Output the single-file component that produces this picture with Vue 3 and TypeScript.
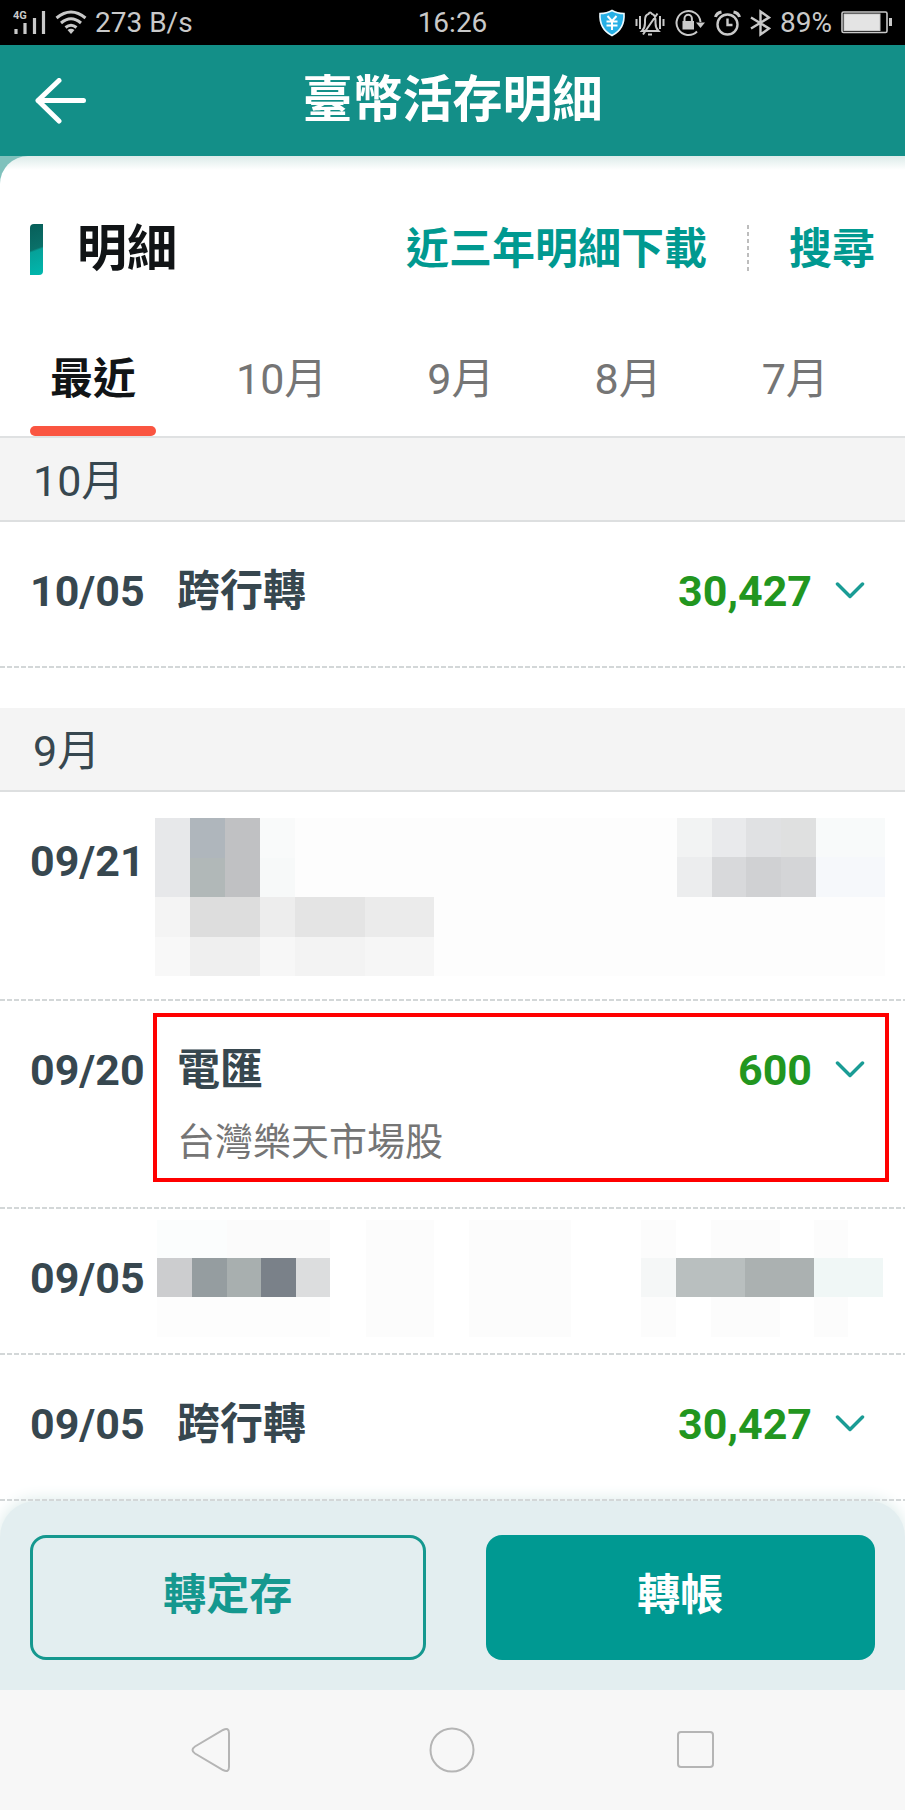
<script setup lang="ts">
import { ref } from 'vue'

interface Tile {
  x: number
  y: number
  w: number
  h: number
  fill: string
}

interface Entry {
  id: number
  date: string
  title?: string
  note?: string
  amount?: string
  marked?: boolean
  tiles?: Tile[]
}

interface Group {
  month: string
  entries: Entry[]
}

const tabs = ['最近', '10月', '9月', '8月', '7月']
const active = ref(0)

const t = (x: number, y: number, w: number, h: number, fill: string): Tile => ({ x, y, w, h, fill })

const tallTiles: Tile[] = [
  t(0, 0, 730, 158, '#fdfdfd'),
  t(0, 0, 35, 79, '#e7e8ea'),
  t(35, 0, 35, 40, '#afb6bc'),
  t(35, 40, 35, 39, '#b1b8b8'),
  t(70, 0, 35, 79, '#c0c1c3'),
  t(105, 0, 35, 40, '#f9fafa'),
  t(105, 40, 35, 39, '#f7f9f9'),
  t(0, 79, 35, 40, '#f4f4f4'),
  t(35, 79, 70, 40, '#dddddd'),
  t(105, 79, 35, 40, '#ededed'),
  t(140, 79, 70, 40, '#e4e4e4'),
  t(210, 79, 69, 40, '#ebebeb'),
  t(0, 119, 35, 39, '#f8f8f8'),
  t(35, 119, 70, 39, '#efefef'),
  t(105, 119, 35, 39, '#f7f7f7'),
  t(140, 119, 70, 39, '#f3f3f3'),
  t(210, 119, 69, 39, '#f6f6f6'),
  t(522, 0, 35, 40, '#f2f3f3'),
  t(557, 0, 34, 40, '#e9eaec'),
  t(591, 0, 35, 40, '#e0e1e3'),
  t(626, 0, 35, 40, '#dfe0e0'),
  t(522, 39, 35, 40, '#ecedee'),
  t(557, 39, 34, 40, '#d8d9db'),
  t(591, 39, 35, 40, '#d0d1d3'),
  t(626, 39, 35, 40, '#d4d5d7'),
  t(661, 0, 69, 40, '#f8fafa'),
  t(661, 39, 69, 40, '#f6f8fb'),
]

const shortTiles: Tile[] = [
  t(2, 0, 70, 38, '#fbfdfd'),
  t(72, 0, 103, 38, '#fbfbfb'),
  t(2, 77, 173, 40, '#fdfdfd'),
  t(211, 0, 68, 117, '#fcfcfc'),
  t(314, 0, 102, 117, '#fcfcfc'),
  t(486, 0, 35, 117, '#fcfcfc'),
  t(556, 0, 69, 117, '#fcfcfc'),
  t(659, 0, 34, 117, '#fcfcfc'),
  t(2, 38, 35, 39, '#cccdcf'),
  t(37, 38, 35, 39, '#959da0'),
  t(72, 38, 34, 39, '#a8afaf'),
  t(106, 38, 35, 39, '#7a8189'),
  t(141, 38, 34, 39, '#dcddde'),
  t(486, 38, 35, 39, '#f5f7f7'),
  t(521, 38, 69, 39, '#b9bfbf'),
  t(590, 38, 69, 39, '#abb1b1'),
  t(659, 38, 69, 39, '#f0f7f6'),
]

const groups: Group[] = [
  {
    month: '10月',
    entries: [{ id: 1, date: '10/05', title: '跨行轉', amount: '30,427' }],
  },
  {
    month: '9月',
    entries: [
      { id: 2, date: '09/21', tiles: tallTiles },
      { id: 3, date: '09/20', title: '電匯', note: '台灣樂天市場股', amount: '600', marked: true },
      { id: 4, date: '09/05', tiles: shortTiles },
      { id: 5, date: '09/05', title: '跨行轉', amount: '30,427' },
    ],
  },
]
</script>

<template>
  <div class="screen">
    <div class="status">
      <div class="status-side">
        <svg width="34" height="28" viewBox="0 0 34 28" aria-hidden="true">
          <text x="0" y="10" font-size="11" font-weight="700">4G</text>
          <path d="M3 20v5M12 14v11M21.500 9v16M30.500 2v23" stroke-width="3.200" />
        </svg>
        <svg width="32" height="26" viewBox="0 0 32 26" aria-hidden="true">
          <path d="M1.500 8Q16-4 30.500 8M6 13Q16 4.500 26 13M10.500 17.500Q16 13 21.500 17.500" fill="none" stroke-width="3" />
          <path d="M12.500 20Q16 17.500 19.500 20L16 24z" class="solid" />
        </svg>
        <span>273 B/s</span>
      </div>
      <span>16:26</span>
      <div class="status-side end">
        <svg width="28" height="28" viewBox="0 0 28 28" aria-hidden="true">
          <path d="M14 1.500Q19 4.500 26 4.500Q27 20 14 26.500Q1 20 2 4.500Q9 4.500 14 1.500z" fill="#27b0e6" stroke="#eefaff" stroke-width="1.600" />
          <path d="M9.500 7l4.500 5l4.500-5M8.500 12.500h11M8.500 16.500h11M14 12v9" fill="none" stroke="#fff" stroke-width="2" />
        </svg>
        <svg width="30" height="26" viewBox="0 0 30 26" aria-hidden="true">
          <g fill="none" stroke-width="2">
            <path d="M1.500 9v7M5 6v13M25 6v13M28.500 9v7" />
            <path d="M7 21Q10 18 10 13V10Q10 5 13.500 4Q15 1 17 4Q20.500 5 20.500 10V13Q20.500 18 23.500 21zM8 24.500L22.500 3.500M13 24.500h4" />
          </g>
        </svg>
        <svg width="31" height="28" viewBox="0 0 31 28" aria-hidden="true">
          <path d="M23 22.500A12 12 0 1 1 26.500 13" fill="none" stroke-width="2" />
          <path d="M22 13.500h9L26.500 19z" class="solid" />
          <rect x="8.500" y="12" width="11.500" height="8.500" class="solid" />
          <path d="M10.500 12V9.500a3.700 3.700 0 0 1 7.400 0V12" fill="none" stroke-width="2" />
        </svg>
        <svg width="27" height="26" viewBox="0 0 27 26" aria-hidden="true">
          <g fill="none" stroke-width="2.400">
            <circle cx="13.500" cy="14.500" r="10" />
            <path d="M13.500 8.500V15h5" />
            <path d="M1.500 7Q2.500 3 7.500 2M25.500 7Q24.500 3 19.500 2" stroke-width="3" />
          </g>
        </svg>
        <svg width="21" height="28" viewBox="0 0 21 28" aria-hidden="true">
          <path d="M1 8.500L19 19.500L10.500 25.500V2.500L19 8.500L1 19.500" fill="none" stroke-width="2.400" />
        </svg>
        <span>89%</span>
        <svg width="51" height="23" viewBox="0 0 51 23" aria-hidden="true">
          <rect x="1" y="1" width="45" height="20.500" rx="1.500" fill="none" stroke-width="1.600" />
          <rect x="3" y="3" width="36" height="16.500" fill="#e4e4e4" />
          <rect x="48" y="7" width="3" height="8" class="solid" />
        </svg>
      </div>
    </div>

    <header class="topbar">
      <button class="back" type="button" aria-label="返回">
        <svg width="52" height="46" viewBox="0 0 52 46" aria-hidden="true">
          <path d="M25 2.500L4 22.500L25 43M4 22.500H49.500" fill="none" stroke="#fff" stroke-width="5" stroke-linecap="round" stroke-linejoin="round" />
        </svg>
      </button>
      <h1>臺幣活存明細</h1>
    </header>

    <div class="sheet-wrap">
      <main class="sheet">
        <div class="heading">
          <span class="mark"></span>
          <h2>明細</h2>
          <a href="#download">近三年明細下載</a>
          <span class="divider"></span>
          <a href="#search">搜尋</a>
        </div>

        <nav class="tabs" aria-label="月份">
          <button
            v-for="(label, i) in tabs"
            :key="label"
            type="button"
            :class="['tab', { on: i === active }]"
            @click="active = i"
          >{{ label }}</button>
        </nav>

        <section v-for="group in groups" :key="group.month" class="group">
          <h3>{{ group.month }}</h3>
          <ul>
            <li v-for="entry in group.entries" :key="entry.id" :class="['entry', { masked: entry.tiles }]">
              <span class="date">{{ entry.date }}</span>
              <svg
                v-if="entry.tiles"
                :class="['mosaic', { short: entry.tiles === shortTiles }]"
                :viewBox="`0 0 730 ${entry.tiles === tallTiles ? 158 : 117}`"
                shape-rendering="crispEdges"
                aria-hidden="true"
              >
                <rect
                  v-for="(tile, i) in entry.tiles"
                  :key="i"
                  :x="tile.x"
                  :y="tile.y"
                  :width="tile.w"
                  :height="tile.h"
                  :fill="tile.fill"
                />
              </svg>
              <button v-else class="detail" type="button">
                <span class="line">
                  <span class="title">{{ entry.title }}</span>
                  <span class="amount">{{ entry.amount }}</span>
                  <svg width="30" height="18" viewBox="0 0 30 18" aria-hidden="true">
                    <path d="M2.500 2L15 14.500L27.500 2" fill="none" stroke="#1a9c95" stroke-width="3.500" stroke-linecap="round" stroke-linejoin="round" />
                  </svg>
                </span>
                <span v-if="entry.note" class="note">{{ entry.note }}</span>
              </button>
              <span v-if="entry.marked" class="frame"></span>
            </li>
          </ul>
        </section>
      </main>
    </div>

    <footer class="actions">
      <button class="action outline" type="button">轉定存</button>
      <button class="action filled" type="button">轉帳</button>
    </footer>

    <nav class="system" aria-label="系統">
      <button type="button" aria-label="上一頁">
        <svg width="46" height="46" viewBox="0 0 46 46" aria-hidden="true">
          <path d="M35 3Q41 0 41 6V40Q41 46 35 43L7 26.500Q2 23 7 19.500z" />
        </svg>
      </button>
      <button type="button" aria-label="主畫面">
        <svg width="46" height="46" viewBox="0 0 46 46" aria-hidden="true">
          <circle cx="23" cy="23" r="21.500" />
        </svg>
      </button>
      <button type="button" aria-label="最近使用">
        <svg width="46" height="46" viewBox="0 0 46 46" aria-hidden="true">
          <rect x="7" y="5" width="35" height="35" rx="3" />
        </svg>
      </button>
    </nav>
  </div>
</template>

<style>
body {
  margin: 0;
}
</style>

<style scoped>
.screen {
  display: flex;
  flex-direction: column;
  min-height: 100vh;
  background: #fff;
  color: #37474f;
  font-family: Roboto, "Noto Sans CJK TC", sans-serif;
  font-size: 43px;
  line-height: 50px;
}

button {
  margin: 0;
  padding: 0;
  border: 0;
  background: none;
  color: inherit;
  font: inherit;
  cursor: pointer;
}

svg {
  display: block;
  flex: none;
}

h1,
h2,
h3,
ul {
  margin: 0;
  padding: 0;
}

.status {
  display: grid;
  grid-template-columns: 1fr auto 1fr;
  align-items: center;
  height: 45px;
  padding: 0 13px;
  background: #000;
  color: #c9c9c9;
  font-size: 28px;
  line-height: 45px;
}

.status svg {
  stroke: #c9c9c9;
}

.status svg text,
.status .solid {
  fill: #c9c9c9;
  stroke: none;
}

.status-side {
  display: flex;
  align-items: center;
  gap: 8px;
}

.status-side.end {
  justify-content: flex-end;
  gap: 9px;
}

.topbar {
  display: grid;
  grid-template-columns: 56px 1fr 56px;
  align-items: center;
  height: 111px;
  padding: 0 34px;
  background: #138f88;
  color: #fff;
}

.topbar h1 {
  padding-bottom: 2px;
  font-size: 50px;
  font-weight: 700;
  line-height: 60px;
  text-align: center;
}

.sheet-wrap {
  background: #7fc1bc;
}

.sheet {
  border-radius: 28px 0 0 0;
  background: linear-gradient(#dcebe9, #fff 14px);
}

.heading {
  display: flex;
  align-items: center;
  padding: 61px 30px 49px;
  line-height: 64px;
}

.mark {
  width: 13px;
  height: 51px;
  margin-right: 34px;
  border-radius: 4px 0 4px 0;
  background: linear-gradient(160deg, #075e59, #0a7069 48%, #06a199 52%, #00b8ae);
}

.heading h2 {
  flex: 1;
  color: #111416;
  font-size: 50px;
  font-weight: 700;
}

.heading a {
  color: #009990;
  font-weight: 700;
  text-decoration: none;
}

.divider {
  width: 2px;
  height: 48px;
  margin: 0 40px;
  background: repeating-linear-gradient(#bdbdbd 0 4px, transparent 4px 7px);
}

.tabs {
  display: flex;
  gap: 60px;
  padding: 0 30px;
  border-bottom: 2px solid #dfe1e2;
}

.tab {
  position: relative;
  padding: 24px 20px 32px;
  color: #757575;
}

.tab.on {
  color: #111416;
  font-weight: 700;
}

.tab.on::after {
  content: "";
  position: absolute;
  inset: auto 0 0;
  height: 10px;
  border-radius: 5px;
  background: #fa5541;
}

.group + .group {
  margin-top: 40px;
}

.group h3 {
  padding: 18px 33px 14px;
  border-bottom: 2px solid #dddfe0;
  background: #f4f4f4;
  font-size: 43px;
  font-weight: 400;
}

.group ul {
  list-style: none;
}

.entry {
  position: relative;
  z-index: 1;
  display: flex;
  padding: 44px 30px 49px;
  font-weight: 700;
}

.entry:has(.note) {
  padding-bottom: 42px;
}

.entry::after {
  content: "";
  position: absolute;
  inset: auto 0 0;
  height: 2px;
  background: repeating-linear-gradient(90deg, #d3d7d8 0 5px, transparent 5px 7px);
}

.entry::before {
  content: "";
  order: 3;
  height: 53px;
}

.date {
  flex: none;
  width: 147px;
}

.detail {
  flex: 1;
  display: flex;
  flex-direction: column;
  gap: 22px;
  text-align: left;
}

.line {
  display: flex;
  align-items: center;
}

.title {
  flex: 1;
}

.amount {
  margin-right: 23px;
  color: #22961f;
}

.line svg {
  margin-right: 10px;
}

.note {
  color: #757575;
  font-size: 38px;
  font-weight: 400;
}

.frame {
  position: absolute;
  inset: 12px 16px 27px 153px;
  border: 4px solid #f00;
  pointer-events: none;
}

.masked {
  padding-right: 20px;
}

.masked .date {
  width: 125px;
}

.mosaic {
  flex: 1;
  align-self: flex-start;
  min-width: 0;
  margin: -18px 0 -24px;
}

.mosaic.short {
  margin: -33px 0 -40px;
}

.actions {
  display: flex;
  gap: 60px;
  padding: 34px 30px 30px;
  border-radius: 36px 36px 0 0;
  background: #e3eef0;
  box-shadow: 0 -2px 16px #dcebea;
}

.action {
  flex: 1;
  height: 125px;
  padding-bottom: 6px;
  border-radius: 16px;
  font-weight: 700;
}

.outline {
  border: 3px solid #15988f;
  color: #15988f;
}

.filled {
  background: #009992;
  color: #fff;
}

.system {
  flex: 1;
  display: grid;
  grid-template-columns: repeat(3, 1fr);
  align-items: center;
  min-height: 120px;
  padding: 0 90px;
  background: #f7f7f7;
}

.system button {
  display: flex;
  justify-content: center;
}

.system svg {
  fill: none;
  stroke: #b5b5b5;
  stroke-width: 2;
}
</style>
